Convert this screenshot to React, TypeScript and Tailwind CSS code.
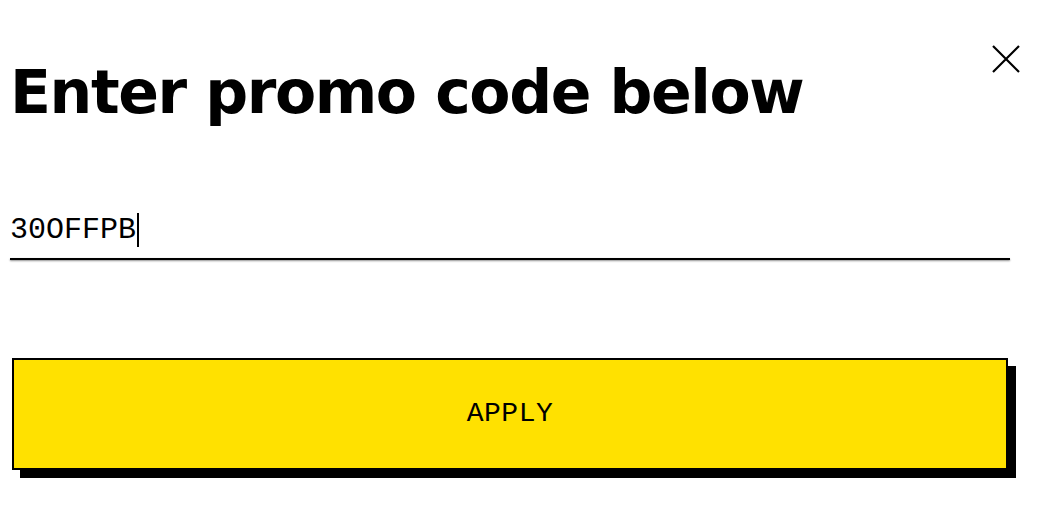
// Promo code entry panel
export default function App() {
  const code = "30OFFPB";

  return (
    <div className="relative h-[522px] w-[1040px] bg-white overflow-hidden">
      <button
        aria-label="Close"
        className="absolute left-[991px] top-[44px] h-[30px] w-[30px] flex items-center justify-center"
      >
        <svg width="30" height="30" viewBox="0 0 30 30" fill="none">
          <path d="M2 2L28 28M28 2L2 28" stroke="#000" strokeWidth="2.2" />
        </svg>
      </button>

      <div className="flex flex-col pl-[10px] pt-[52px]">
        <h1
          className="text-[60px] leading-[80px] font-bold text-black tracking-[-1.4px]"
          style={{ fontFamily: '"DejaVu Sans", "Noto Sans", sans-serif' }}
        >
          Enter promo code below
        </h1>

        <div className="mt-[78px] w-[1000px]">
          {/* field with caret after the typed value */}
          <div
            className="flex items-center h-[48px] pb-[8px] text-[30px] text-black"
            style={{ fontFamily: '"Liberation Mono", monospace' }}
          >
            <span>{code}</span>
            <span className="ml-[1px] inline-block h-[34px] w-[2px] bg-black" />
          </div>
          <div className="h-[2px] bg-black shadow-[0_1px_2px_rgba(0,0,0,0.45)]" />
        </div>

        <div className="mt-[98px] ml-[2px] w-[996px]">
          <button
            className="w-full h-[112px] bg-[#ffe100] border-2 border-black shadow-[8px_8px_0_0_#000] text-[28px] tracking-[0.5px] text-black"
            style={{ fontFamily: '"Liberation Mono", monospace' }}
          >
            APPLY
          </button>
        </div>
      </div>
    </div>
  );
}
